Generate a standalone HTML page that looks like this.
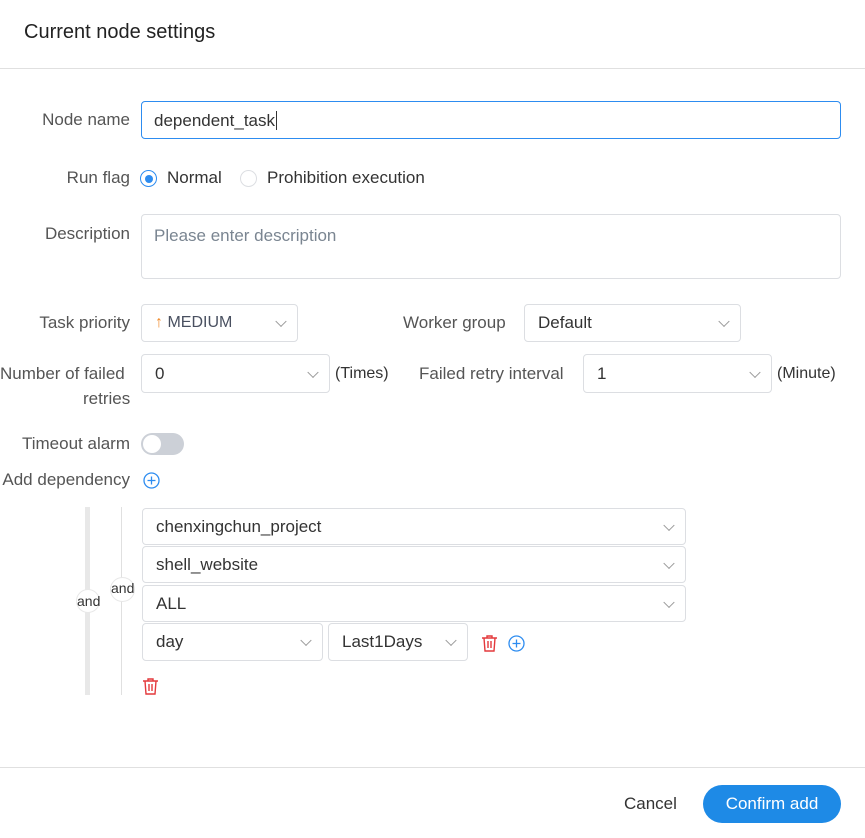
<!DOCTYPE html>
<html><head><style>
body{margin:0;width:865px;height:838px;background:#fff;font-family:"Liberation Sans",sans-serif;color:#333;position:relative;overflow:hidden;font-size:17px}
.a{position:absolute}
.lbl{position:absolute;right:735px;color:#555;font-size:17px;white-space:nowrap;text-align:right;line-height:20px}
.box{position:absolute;border:1px solid #dcdee2;border-radius:4px;box-sizing:border-box;background:#fff}
.sel .t{position:absolute;left:13px;top:50%;transform:translateY(-50%);color:#333}
.chev{position:absolute;right:12px;top:50%;width:7px;height:7px;border-right:1px solid #999;border-bottom:1px solid #999;transform:translateY(-70%) rotate(45deg)}
.txt{position:absolute;line-height:20px;white-space:nowrap}
</style></head><body>
<div class="txt" style="left:24px;top:22px;font-size:20px;color:#222">Current node settings</div>
<div class="a" style="left:0;top:68px;width:865px;height:1px;background:#e0e0e0"></div>

<div class="lbl" style="top:110px">Node name</div>
<div class="box" style="left:141px;top:101px;width:700px;height:38px;border-color:#2d8cf0"><span class="txt" style="left:12px;top:9px">dependent_task<span style="border-left:1px solid #333;margin-left:1px"></span></span></div>

<div class="lbl" style="top:168px">Run flag</div>
<div class="a" style="left:140px;top:170px;width:17px;height:17px;border:1px solid #2d8cf0;border-radius:50%;box-sizing:border-box"><div class="a" style="left:3.5px;top:3.5px;width:8px;height:8px;border-radius:50%;background:#2d8cf0"></div></div>
<div class="txt" style="left:167px;top:168px">Normal</div>
<div class="a" style="left:240px;top:170px;width:17px;height:17px;border:1px solid #dcdee2;border-radius:50%;box-sizing:border-box"></div>
<div class="txt" style="left:267px;top:168px">Prohibition execution</div>

<div class="lbl" style="top:224px">Description</div>
<div class="box" style="left:141px;top:214px;width:700px;height:65px"><span class="txt" style="left:12px;top:11px;color:#7a8591">Please enter description</span></div>

<div class="lbl" style="top:313px">Task priority</div>
<div class="box sel" style="left:141px;top:304px;width:157px;height:38px"><span class="t" style="color:#495060;font-size:16px"><b style="color:#f08c2d">&#8593;</b> MEDIUM</span><span class="chev"></span></div>
<div class="txt" style="left:403px;top:313px;color:#555">Worker group</div>
<div class="box sel" style="left:524px;top:304px;width:217px;height:38px"><span class="t">Default</span><span class="chev"></span></div>

<div class="txt" style="left:0;top:364px;color:#555">Number of failed</div>
<div class="txt" style="left:83px;top:389px;color:#555">retries</div>
<div class="box sel" style="left:141px;top:354px;width:189px;height:39px"><span class="t">0</span><span class="chev"></span></div>
<div class="txt" style="left:335px;top:364px;font-size:16px">(Times)</div>
<div class="txt" style="left:419px;top:364px;color:#555">Failed retry interval</div>
<div class="box sel" style="left:583px;top:354px;width:189px;height:39px"><span class="t">1</span><span class="chev"></span></div>
<div class="txt" style="left:777px;top:364px;font-size:16px">(Minute)</div>

<div class="lbl" style="top:434px">Timeout alarm</div>
<div class="a" style="left:141px;top:433px;width:43px;height:22px;border-radius:11px;background:#ccd0d7"><div class="a" style="left:2px;top:2px;width:18px;height:18px;border-radius:50%;background:#fff"></div></div>

<div class="lbl" style="top:470px">Add dependency</div>
<svg class="a" style="left:143px;top:472px" width="17" height="17" viewBox="0 0 17 17"><circle cx="8.5" cy="8.5" r="7.5" fill="none" stroke="#2d8cf0" stroke-width="1.3"/><path d="M8.5 4.5v8M4.5 8.5h8" stroke="#2d8cf0" stroke-width="1.3"/></svg>

<div class="a" style="left:85px;top:507px;width:5px;height:188px;background:#e8e8e8"></div>
<div class="a" style="left:76px;top:589px;width:24px;height:24px;border-radius:50%;background:#fff;border:1px solid #e8e8e8;box-sizing:border-box;font-size:14px;line-height:22px;text-align:center">and</div>
<div class="a" style="left:121px;top:507px;width:1px;height:188px;background:#e0e0e0"></div>
<div class="a" style="left:110px;top:577px;width:25px;height:25px;border-radius:50%;background:#fff;border:1px solid #e8e8e8;box-sizing:border-box;font-size:14px;line-height:20px;text-align:center">and</div>

<div class="box sel" style="left:142px;top:508px;width:544px;height:37px"><span class="t">chenxingchun_project</span><span class="chev"></span></div>
<div class="box sel" style="left:142px;top:546px;width:544px;height:37px"><span class="t">shell_website</span><span class="chev"></span></div>
<div class="box sel" style="left:142px;top:585px;width:544px;height:37px"><span class="t">ALL</span><span class="chev"></span></div>
<div class="box sel" style="left:142px;top:623px;width:181px;height:38px"><span class="t">day</span><span class="chev"></span></div>
<div class="box sel" style="left:328px;top:623px;width:140px;height:38px"><span class="t">Last1Days</span><span class="chev"></span></div>
<svg class="a" style="left:481px;top:634px" width="17" height="18" viewBox="0 0 17 18"><path d="M1 4h15M6 4V2h5v2M3 4l1 13h9l1-13M7 7v7M10 7v7" fill="none" stroke="#e4393c" stroke-width="1.4"/></svg>
<svg class="a" style="left:508px;top:635px" width="17" height="17" viewBox="0 0 17 17"><circle cx="8.5" cy="8.5" r="7.5" fill="none" stroke="#2d8cf0" stroke-width="1.3"/><path d="M8.5 4.5v8M4.5 8.5h8" stroke="#2d8cf0" stroke-width="1.3"/></svg>
<svg class="a" style="left:142px;top:677px" width="17" height="18" viewBox="0 0 17 18"><path d="M1 4h15M6 4V2h5v2M3 4l1 13h9l1-13M7 7v7M10 7v7" fill="none" stroke="#e4393c" stroke-width="1.4"/></svg>

<div class="a" style="left:0;top:767px;width:865px;height:1px;background:#e0e0e0"></div>
<div class="txt" style="left:624px;top:794px;font-size:17px">Cancel</div>
<div class="a" style="left:703px;top:785px;width:138px;height:38px;border-radius:19px;background:#1e8ae6;color:#fff;font-size:17px;line-height:38px;text-align:center">Confirm add</div>
</body></html>
